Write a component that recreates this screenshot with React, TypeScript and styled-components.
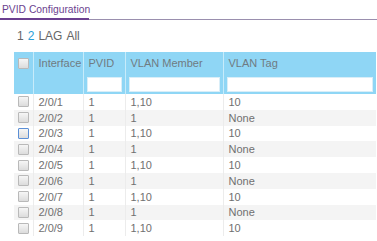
import styled, { createGlobalStyle } from "styled-components";

const GlobalStyle = createGlobalStyle`
  body {
    margin: 0;
    background: #fff;
    font-family: "Liberation Sans", Arial, sans-serif;
    color: #666;
  }
`;

const Page = styled.div`
  width: 377px;
  height: 241px;
  overflow: hidden;
`;

const TabBar = styled.div`
  display: flex;
  border-bottom: 1px solid #9a8fae;
  height: 19px;
`;

const Tab = styled.div`
  font-size: 10.3px;
  color: #6b3f8f;
  padding: 4px 2px 0 2px;
  width: 89px;
  border-bottom: 2px solid #6b3f8f;
  box-sizing: border-box;
  height: 20px;
  white-space: nowrap;
`;

const Pager = styled.div`
  padding: 9px 0 0 17px;
  height: 23px;
  font-size: 12px;
  color: #666;
  display: flex;
  gap: 4px;
`;

const PageLink = styled.span<{ $active?: boolean }>`
  color: ${(p) => (p.$active ? "#2a9fd8" : "#666")};
`;

const Table = styled.table`
  margin-left: 14px;
  width: 362px;
  border-collapse: collapse;
  table-layout: fixed;
  font-size: 11px;
`;

const HeadCell = styled.th<{ $w?: number }>`
  width: ${(p) => (p.$w ? `${p.$w}px` : "auto")};
  background: #8fd6f5;
  color: #6f7b82;
  font-weight: normal;
  text-align: left;
  height: 22px;
  padding: 0 5px;
  border-left: 1px solid #c7ebfa;
  box-sizing: border-box;
  &:first-child {
    border-left: none;
    padding: 0 4px;
  }
`;

const FilterCell = styled.td`
  background: #8fd6f5;
  height: 20px;
  padding: 0 3px;
  border-left: 1px solid #c7ebfa;
  &:first-child {
    border-left: none;
  }
`;

const FilterInput = styled.div`
  height: 13px;
  background: #fff;
  border: 1px solid #d9eef8;
`;

const Row = styled.tr<{ $striped: boolean }>`
  background: ${(p) => (p.$striped ? "#f4f4f4" : "#fff")};
`;

const Cell = styled.td`
  height: 15.8px;
  padding: 0 5px;
  color: #707070;
  border-left: 1px solid #ececec;
  white-space: nowrap;
  &:first-child {
    border-left: none;
    padding: 0 4px;
  }
`;

const Check = styled.span<{ $focus?: boolean }>`
  display: block;
  width: 9px;
  height: 9px;
  border: 1px solid ${(p) => (p.$focus ? "#5b8fd6" : "#b9b9b9")};
  background: linear-gradient(#f6f6f6, #dcdcdc);
  border-radius: 1px;
`;

const rows = [
  { port: "2/0/1", pvid: "1", member: "1,10", tag: "10" },
  { port: "2/0/2", pvid: "1", member: "1", tag: "None" },
  { port: "2/0/3", pvid: "1", member: "1,10", tag: "10" },
  { port: "2/0/4", pvid: "1", member: "1", tag: "None" },
  { port: "2/0/5", pvid: "1", member: "1,10", tag: "10" },
  { port: "2/0/6", pvid: "1", member: "1", tag: "None" },
  { port: "2/0/7", pvid: "1", member: "1,10", tag: "10" },
  { port: "2/0/8", pvid: "1", member: "1", tag: "None" },
  { port: "2/0/9", pvid: "1", member: "1,10", tag: "10" },
];

export default function App() {
  return (
    <Page>
      <GlobalStyle />
      <TabBar>
        <Tab>PVID Configuration</Tab>
      </TabBar>
      <Pager>
        <PageLink>1</PageLink>
        <PageLink $active>2</PageLink>
        <PageLink>LAG</PageLink>
        <PageLink>All</PageLink>
      </Pager>
      <Table>
        <thead>
          <tr>
            <HeadCell $w={19}>
              <Check />
            </HeadCell>
            <HeadCell $w={50}>Interface</HeadCell>
            <HeadCell $w={42}>PVID</HeadCell>
            <HeadCell $w={98}>VLAN Member</HeadCell>
            <HeadCell>VLAN Tag</HeadCell>
          </tr>
          <tr>
            <FilterCell />
            <FilterCell />
            <FilterCell>
              <FilterInput />
            </FilterCell>
            <FilterCell>
              <FilterInput />
            </FilterCell>
            <FilterCell>
              <FilterInput />
            </FilterCell>
          </tr>
        </thead>
        <tbody>
          {rows.map((r, i) => (
            <Row key={r.port} $striped={i % 2 === 1}>
              <Cell>
                <Check $focus={r.port === "2/0/3"} />
              </Cell>
              <Cell>{r.port}</Cell>
              <Cell>{r.pvid}</Cell>
              <Cell>{r.member}</Cell>
              <Cell>{r.tag}</Cell>
            </Row>
          ))}
        </tbody>
      </Table>
    </Page>
  );
}
